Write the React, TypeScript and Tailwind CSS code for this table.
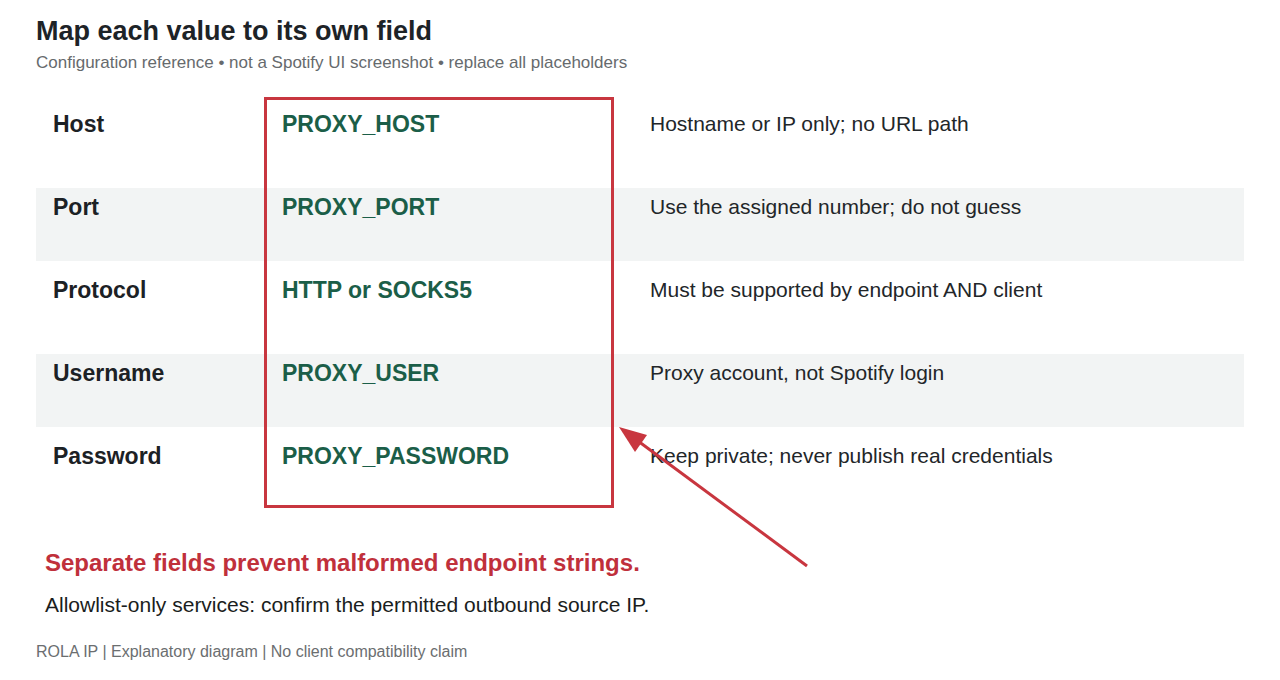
import React from "react";

const rows = [
  { label: "Host", value: "PROXY_HOST", note: "Hostname or IP only; no URL path" },
  { label: "Port", value: "PROXY_PORT", note: "Use the assigned number; do not guess" },
  { label: "Protocol", value: "HTTP or SOCKS5", note: "Must be supported by endpoint AND client" },
  { label: "Username", value: "PROXY_USER", note: "Proxy account, not Spotify login" },
  { label: "Password", value: "PROXY_PASSWORD", note: "Keep private; never publish real credentials" },
];

function App() {
  return (
    <div className="relative w-[1280px] h-[680px] overflow-hidden bg-white px-9 font-['Liberation_Sans',Arial,sans-serif]">
      <h1 className="pt-[15px] text-[27px] leading-[32px] font-bold text-[#1d2327]">
        Map each value to its own field
      </h1>
      <p className="mt-[6px] text-[17px] leading-[20px] text-[#666a6d]">
        Configuration reference • not a Spotify UI screenshot • replace all placeholders
      </p>

      <div className="mt-[32px] flex flex-col gap-[10px]">
        {rows.map((r, i) => (
          <div
            key={r.label}
            className={`grid h-[73px] grid-cols-[246px_368px_1fr] pt-[6px] ${i % 2 === 1 ? "bg-[#f2f4f4]" : ""}`}
          >
            <div className="pl-[17px] text-[23px] leading-[26px] font-bold text-[#1c2125]">{r.label}</div>
            <div className="text-[23px] leading-[26px] font-bold text-[#1b5e48]">{r.value}</div>
            <div className="text-[21px] leading-[26px] text-[#222629]">{r.note}</div>
          </div>
        ))}
      </div>

      <p className="mt-[39px] pl-[9px] text-[24px] leading-[28px] font-bold text-[#c0303b]">
        Separate fields prevent malformed endpoint strings.
      </p>
      <p className="mt-[15px] pl-[9px] text-[21px] leading-[26px] text-[#1a1d20]">
        Allowlist-only services: confirm the permitted outbound source IP.
      </p>
      <p className="mt-[24px] text-[16px] leading-[20px] text-[#6b6e70]">
        ROLA IP | Explanatory diagram | No client compatibility claim
      </p>

      {/* highlight box over the value column */}
      <div className="absolute left-[264px] top-[97px] h-[411px] w-[350px] border-[3px] border-[#c8363f]" />

      {/* callout arrow */}
      <svg className="absolute left-0 top-0" width="1280" height="680" viewBox="0 0 1280 680">
        <line x1="807" y1="566" x2="638" y2="441" stroke="#c8363f" strokeWidth="3" />
        <polygon points="619,427 647,435 635,452" fill="#c8363f" />
      </svg>
    </div>
  );
}

export default App;
